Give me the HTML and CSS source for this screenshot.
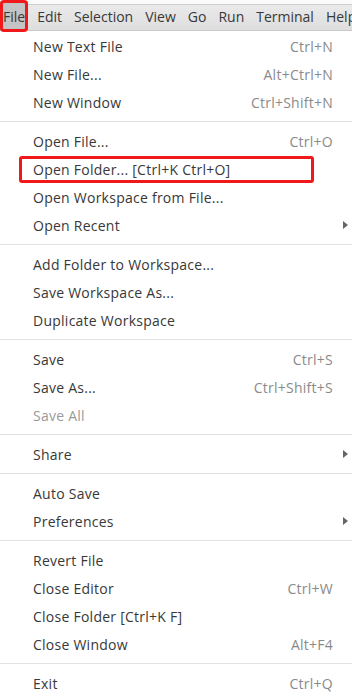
FILE: index.html
```html
<!DOCTYPE html>
<html lang="en">
<head>
  <meta charset="UTF-8">
  <meta name="viewport" content="width=device-width, initial-scale=1.0">
  <title>File menu</title>
  <link rel="stylesheet" href="styles.css">
</head>
<body>
  <header class="menubar">
    <span class="mb-item active">File</span>
    <span class="mb-item">Edit</span>
    <span class="mb-item">Selection</span>
    <span class="mb-item">View</span>
    <span class="mb-item">Go</span>
    <span class="mb-item">Run</span>
    <span class="mb-item">Terminal</span>
    <span class="mb-item">Help</span>
  </header>

  <ul class="menu">
    <li class="item"><span>New Text File</span><span class="key">Ctrl+N</span></li>
    <li class="item"><span>New File...</span><span class="key">Alt+Ctrl+N</span></li>
    <li class="item"><span>New Window</span><span class="key">Ctrl+Shift+N</span></li>
    <li class="sep"></li>
    <li class="item"><span>Open File...</span><span class="key">Ctrl+O</span></li>
    <li class="item marked"><span>Open Folder... [Ctrl+K Ctrl+O]</span></li>
    <li class="item"><span>Open Workspace from File...</span></li>
    <li class="item sub"><span>Open Recent</span></li>
    <li class="sep"></li>
    <li class="item"><span>Add Folder to Workspace...</span></li>
    <li class="item"><span>Save Workspace As...</span></li>
    <li class="item"><span>Duplicate Workspace</span></li>
    <li class="sep"></li>
    <li class="item"><span>Save</span><span class="key">Ctrl+S</span></li>
    <li class="item"><span>Save As...</span><span class="key">Ctrl+Shift+S</span></li>
    <li class="item disabled"><span>Save All</span></li>
    <li class="sep"></li>
    <li class="item sub"><span>Share</span></li>
    <li class="sep"></li>
    <li class="item"><span>Auto Save</span></li>
    <li class="item sub"><span>Preferences</span></li>
    <li class="sep"></li>
    <li class="item"><span>Revert File</span></li>
    <li class="item"><span>Close Editor</span><span class="key">Ctrl+W</span></li>
    <li class="item"><span>Close Folder [Ctrl+K F]</span></li>
    <li class="item"><span>Close Window</span><span class="key">Alt+F4</span></li>
    <li class="sep"></li>
    <li class="item"><span>Exit</span><span class="key">Ctrl+Q</span></li>
  </ul>
</body>
</html>
```

FILE: styles.css
```css
:root {
  --text: #383838;
  --muted: #8a8a8a;
  --line: #e2e2e2;
  --mark: #f01818;
}
* { box-sizing: border-box; margin: 0; padding: 0; }
html, body { overflow: hidden; }
body { background: #fff; color: var(--text); font-family: 'Open Sans', sans-serif; font-size: 14px; }

.menubar { position: relative; z-index: 1; display: flex; height: 31px; padding: 4px 0 0 3px; gap: 12px; align-items: center;
  background: linear-gradient(#ececec, #dedede); border-bottom: 1px solid #c9c9c9;
  box-shadow: inset 0 4px 0 #fafafa, inset 0 5px 0 #cfcfcf; white-space: nowrap; }
.mb-item { line-height: 26px; }
.mb-item.active { position: relative; z-index: 0; }
.mb-item.active::before { content: ''; position: absolute; left: -3px; right: -3px; top: -3px; bottom: -1px;
  background: #c4c4c4; z-index: -1; }
.mb-item.active::after { content: ''; position: absolute; left: -3px; right: -3px; top: -4px; bottom: -2px;
  border: 3px solid var(--mark); border-radius: 4px; }

.menu { list-style: none; padding-top: 1px; }
.item { display: flex; justify-content: space-between; align-items: center; height: 28px; padding: 0 19px 0 33px;
  position: relative; letter-spacing: 0.25px; }
.key { color: var(--muted); }
.disabled { color: #9a9a9a; }
.sep { height: 11px; display: flex; align-items: center; }
.sep::before { content: ''; flex: 1; height: 1px; background: var(--line); }
.sub::after { content: ''; position: absolute; right: 4px; top: 10px; border-left: 5px solid #666;
  border-top: 4px solid transparent; border-bottom: 4px solid transparent; }
.marked::before { content: ''; position: absolute; left: 19px; width: 289px; top: 1px; bottom: 0;
  border: 3px solid var(--mark); border-radius: 3px; }
```
